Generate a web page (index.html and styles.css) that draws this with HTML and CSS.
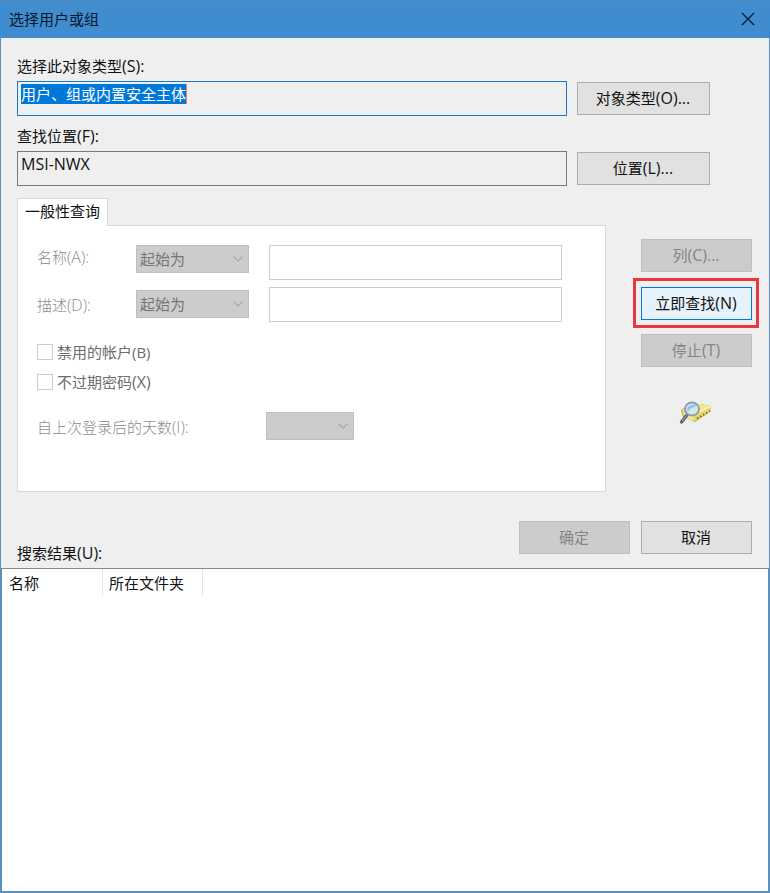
FILE: index.html
```html
<!DOCTYPE html>
<html lang="zh-CN">
<head>
<meta charset="utf-8">
<title>选择用户或组</title>
<link rel="stylesheet" href="styles.css">
</head>
<body>
<div class="window">
  <header class="titlebar">
    <span>选择用户或组</span>
    <svg class="close" width="14" height="14" viewBox="0 0 14 14"><path d="M1 1L13 13M13 1L1 13"/></svg>
  </header>
  <main class="content">
    <div class="label">选择此对象类型<span class="key">(S):</span></div>
    <div class="pick-row">
      <div class="field focused"><span class="selection">用户、组或内置安全主体</span></div>
      <button class="btn wide">对象类型<span class="key">(O)...</span></button>
    </div>
    <div class="label">查找位置<span class="key">(F):</span></div>
    <div class="pick-row">
      <div class="field"><span class="value">MSI-NWX</span></div>
      <button class="btn wide">位置<span class="key">(L)...</span></button>
    </div>
    <div class="query">
      <section class="tabs">
        <div class="tab">一般性查询</div>
        <div class="panel">
          <div class="criteria first">
            <span class="etched">名称<span class="key">(A):</span></span>
            <div class="select">起始为<svg width="12" height="8" viewBox="0 0 12 8"><path d="M1.5 1.5L6 6L10.5 1.5"/></svg></div>
            <div class="input"></div>
          </div>
          <div class="criteria second">
            <span class="etched">描述<span class="key">(D):</span></span>
            <div class="select">起始为<svg width="12" height="8" viewBox="0 0 12 8"><path d="M1.5 1.5L6 6L10.5 1.5"/></svg></div>
            <div class="input"></div>
          </div>
          <div class="check"><i class="box"></i><span>禁用的帐户(B)</span></div>
          <div class="check"><i class="box"></i><span>不过期密码<span class="key">(X)</span></span></div>
          <div class="days">
            <span class="etched">自上次登录后的天数<span class="key">(I):</span></span>
            <div class="select short"><svg width="12" height="8" viewBox="0 0 12 8"><path d="M1.5 1.5L6 6L10.5 1.5"/></svg></div>
          </div>
        </div>
      </section>
      <aside class="actions">
        <button class="btn disabled">列<span class="key">(C)...</span></button>
        <div class="highlight"><button class="btn primary">立即查找<span class="key">(N)</span></button></div>
        <button class="btn disabled">停止<span class="key">(T)</span></button>
        <svg class="search-icon" width="34" height="28" viewBox="0 0 34 28">
          <path d="M2 11L7 8L21 5L32 7L32 12L16 23L4 18Z" fill="#b9a53a"/>
          <path d="M2 11L20 5L32 7L15 16Z" fill="#f2e98f"/>
          <path d="M3 12L15 16L16 22L6 20Z" fill="#f0e79a"/>
          <path d="M15 16L32 7L32 12L16 22Z" fill="#e6d76a"/>
          <path d="M15 16L32 7" stroke="#fbf7c8" stroke-width="1.200"/>
          <path d="M18 19.500L31 12" stroke="#6e6226" stroke-width="1.800" stroke-dasharray="1.500 2"/>
          <path d="M8 16L2.500 23" stroke="#5d6065" stroke-width="3.400" stroke-linecap="round"/>
          <path d="M8 16L3 22" stroke="#b0b4b9" stroke-width="1" stroke-linecap="round"/>
          <ellipse cx="13" cy="10" rx="7" ry="6.500" fill="#cfe6f7" stroke="#8d9aab" stroke-width="1.800"/>
          <path d="M8 10Q11 5 17 6L16 8Q12 8 9 12Z" fill="#8dbde6"/>
          <path d="M10 13L18 9L17 12Q14 15 10 13Z" fill="#e3edb4"/>
        </svg>
      </aside>
    </div>
    <div class="footer">
      <span class="results-label">搜索结果<span class="key">(U):</span></span>
      <button class="btn disabled">确定</button>
      <button class="btn">取消</button>
    </div>
  </main>
  <section class="results">
    <div class="columns">
      <div class="column name">名称</div>
      <div class="column folder">所在文件夹</div>
    </div>
  </section>
</div>
</body>
</html>
```
FILE: styles.css
```css
* { box-sizing: border-box; }
body {
  margin: 0;
  font: 15px/20px "Open Sans", "Noto Sans CJK SC", sans-serif;
  color: #111;
}
.window {
  width: 770px;
  height: 893px;
  display: flex;
  flex-direction: column;
  background: #efefef;
}
.titlebar {
  height: 38px;
  flex: none;
  display: flex;
  align-items: center;
  justify-content: space-between;
  padding: 0 15px 2px 9px;
  background: #3f8dce;
  border-top: 1px solid #5289bd;
  color: #06192c;
}
.close { fill: none; stroke: #06192c; stroke-width: 1.2; }
.content {
  height: 530px;
  flex: none;
  padding: 18px 17px 0 16px;
  border: solid #5a8fbe;
  border-width: 0 1px;
}
.label { height: 25px; }
.key, .value { font-size: 16px; }
.pick-row {
  display: flex;
  align-items: center;
  gap: 10px;
  height: 35px;
  margin-bottom: 10px;
}
.field {
  width: 550px;
  height: 35px;
  padding: 2px 3px;
  border: 1px solid #7a7a7a;
}
.field.focused { border-color: #1979ca; }
.selection, .value { display: inline-block; height: 20px; line-height: 20px; }
.selection { background: #0078d7; color: #fff; border-right: 1px solid #e78b42; }
.btn {
  width: 111px;
  height: 33px;
  padding: 0 1px 2px 0;
  border: 1px solid #adadad;
  border-radius: 0;
  background: #e1e1e1;
  font: inherit;
  color: #111;
}
.btn.wide { width: 133px; }
.btn.disabled { background: #ccc; border-color: #bfbfbf; color: #858585; }
.btn.primary { background: #e5f1fb; border-color: #0078d7; }
.query {
  display: flex;
  justify-content: space-between;
  height: 294px;
  margin-top: 12px;
}
.tabs { width: 589px; }
.tab {
  position: relative;
  width: 91px;
  height: 28px;
  padding: 2px 0 0 7px;
  margin-bottom: -1px;
  background: #fff;
  border: 1px solid #d9d9d9;
  border-bottom: 0;
  white-space: nowrap;
}
.panel {
  height: 267px;
  padding: 19px 43px 0 19px;
  background: #fff;
  border: 1px solid #d9d9d9;
}
.criteria { display: grid; grid-template-columns: 99px 133px 293px; }
.criteria.first { height: 42px; }
.criteria.second { height: 57px; }
.etched { color: #8c8c8c; font-weight: 300; }
.first .etched { margin-top: 2px; }
.second .etched { margin-top: 8px; }
.second .select { margin-top: 3px; }
.select {
  width: 113px;
  height: 28px;
  display: flex;
  align-items: center;
  justify-content: space-between;
  padding: 0 4px 0 3px;
  background: #ccc;
  border: 1px solid #bfbfbf;
  color: #757575;
}
.select svg { fill: none; stroke: #aaa; stroke-width: 1.3; }
.select.short { width: 88px; justify-content: flex-end; }
.input { height: 35px; border: 1px solid #ccc; background: #fff; }
.check {
  display: flex;
  align-items: center;
  gap: 4px;
  height: 16px;
  margin-bottom: 14px;
  color: #6d6d6d;
}
.box { width: 16px; height: 16px; border: 1px solid #ccc; }
.days {
  display: grid;
  grid-template-columns: 229px 88px;
  align-items: center;
  margin-top: 22px;
}
.days .etched { padding-top: 2px; }
.actions {
  width: 127px;
  padding: 41px 0 0 8px;
  margin-right: -8px;
  display: flex;
  flex-direction: column;
}
.highlight {
  width: 126px;
  height: 50px;
  padding: 6px 5px;
  margin: 6px 0 6px -8px;
  border: 3px solid #e5393f;
}
.search-icon { margin: 32px 0 0 38px; }
.footer {
  display: flex;
  align-items: flex-start;
  gap: 11px;
  margin-top: 29px;
}
.results-label { width: 491px; padding-top: 22px; }
.results {
  flex: 1;
  background: #fff;
  border: solid #5a8fbe;
  border-width: 1px 2px 2px;
  border-top-color: #828790;
}
.columns { display: flex; height: 27px; }
.column { height: 27px; padding-top: 4px; border-right: 1px solid #e5e5e5; }
.column.name { width: 101px; padding-left: 7px; }
.column.folder { width: 100px; padding-left: 6px; }
```
